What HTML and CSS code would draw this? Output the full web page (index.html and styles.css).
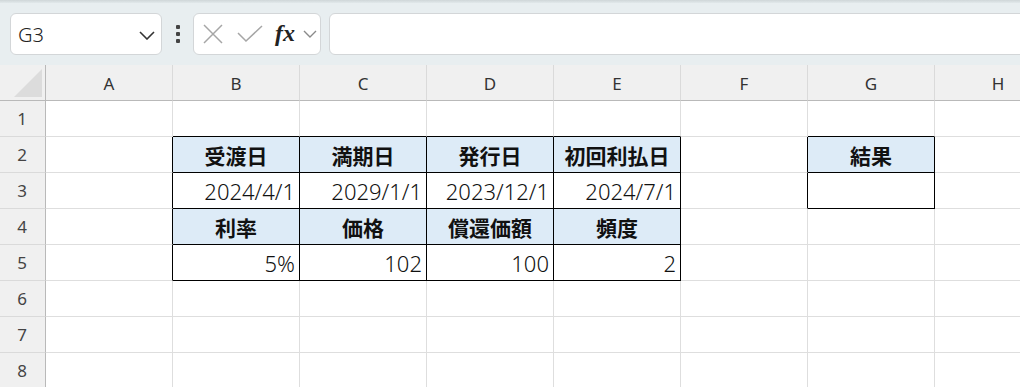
FILE: index.html
```html
<!DOCTYPE html>
<html lang="ja">
<head>
<meta charset="utf-8">
<title>Sheet</title>
<link rel="stylesheet" href="styles.css">
</head>
<body>
<div class="app">
  <div class="topstrip"></div>
  <div class="fbar">
    <div class="namebox">
      <span class="ref">G3</span>
      <svg class="chev" width="16" height="9" viewBox="0 0 16 9"><path d="M1 1 L8 8 L15 1" fill="none" stroke="#333" stroke-width="1.6"/></svg>
    </div>
    <div class="dots"><i></i><i></i><i></i></div>
    <div class="fxbox">
      <svg class="ic" width="22" height="22" viewBox="0 0 22 22"><path d="M2 2 L20 20 M20 2 L2 20" stroke="#a6a6a6" stroke-width="1.5" fill="none"/></svg>
      <svg class="ic ok" width="26" height="18" viewBox="0 0 26 18"><path d="M1 8 L9 16 L25 1" stroke="#a6a6a6" stroke-width="1.5" fill="none"/></svg>
      <span class="fx">fx</span>
      <svg class="chev2" width="14" height="8" viewBox="0 0 14 8"><path d="M1 1 L7 7 L13 1" fill="none" stroke="#8a8a8a" stroke-width="1.4"/></svg>
    </div>
    <div class="finput"></div>
  </div>
  <div class="sheet">
    <div class="corner"><span class="tri"></span></div>
    <div class="ch">A</div><div class="ch">B</div><div class="ch">C</div><div class="ch">D</div><div class="ch">E</div><div class="ch">F</div><div class="ch">G</div><div class="ch">H</div>

    <div class="rh">1</div>
    <div class="c"></div><div class="c bb"></div><div class="c bb"></div><div class="c bb"></div><div class="c bb"></div><div class="c"></div><div class="c bb"></div><div class="c"></div>

    <div class="rh">2</div>
    <div class="c br"></div>
    <div class="c t hd">受渡日</div><div class="c t hd">満期日</div><div class="c t hd">発行日</div><div class="c t hd">初回利払日</div>
    <div class="c br"></div>
    <div class="c t hd">結果</div>
    <div class="c"></div>

    <div class="rh">3</div>
    <div class="c br"></div>
    <div class="c t num">2024/4/1</div><div class="c t num">2029/1/1</div><div class="c t num">2023/12/1</div><div class="c t num">2024/7/1</div>
    <div class="c br"></div>
    <div class="c t"></div>
    <div class="c"></div>

    <div class="rh">4</div>
    <div class="c br"></div>
    <div class="c t hd">利率</div><div class="c t hd">価格</div><div class="c t hd">償還価額</div><div class="c t hd">頻度</div>
    <div class="c"></div><div class="c"></div><div class="c"></div>

    <div class="rh">5</div>
    <div class="c br"></div>
    <div class="c t num">5%</div><div class="c t num">102</div><div class="c t num">100</div><div class="c t num">2</div>
    <div class="c"></div><div class="c"></div><div class="c"></div>

    <div class="rh">6</div>
    <div class="c"></div><div class="c"></div><div class="c"></div><div class="c"></div><div class="c"></div><div class="c"></div><div class="c"></div><div class="c"></div>

    <div class="rh">7</div>
    <div class="c"></div><div class="c"></div><div class="c"></div><div class="c"></div><div class="c"></div><div class="c"></div><div class="c"></div><div class="c"></div>

    <div class="rh">8</div>
    <div class="c"></div><div class="c"></div><div class="c"></div><div class="c"></div><div class="c"></div><div class="c"></div><div class="c"></div><div class="c"></div>
  </div>
</div>
</body>
</html>
```

FILE: styles.css
```css
* { box-sizing: border-box; }
html, body { margin: 0; padding: 0; }
body {
  width: 1020px;
  height: 387px;
  overflow: hidden;
  background: #ffffff;
  font-family: "Noto Sans", "Noto Sans CJK JP", sans-serif;
}
.app { width: 1020px; overflow: hidden; }

.topstrip {
  height: 3px;
  background: linear-gradient(#cfd6d8, #e2e9eb);
}

.fbar {
  display: flex;
  align-items: center;
  height: 62px;
  padding: 10px 0 10px 10px;
  background: #e8eef0;
}
.namebox {
  width: 152px;
  height: 42px;
  background: #fff;
  border: 1px solid #d3d6d8;
  border-radius: 6px;
  display: flex;
  align-items: center;
  justify-content: space-between;
  padding: 0 6px 0 7px;
}
.ref {
  font-family: "Noto Sans", sans-serif;
  font-weight: 300;
  font-size: 20px;
  color: #222;
  line-height: 1;
  padding-top: 2px;
}
.chev { display: block; margin-top: 2px; }

.dots {
  width: 31px;
  display: flex;
  flex-direction: column;
  align-items: center;
  gap: 3px;
}
.dots i {
  display: block;
  width: 4px;
  height: 4px;
  border-radius: 1px;
  background: #444;
}

.fxbox {
  width: 128px;
  height: 42px;
  background: #fff;
  border: 1px solid #d3d6d8;
  border-radius: 6px;
  display: flex;
  align-items: center;
  padding-left: 8px;
}
.ic { display: block; }
.ok { margin-left: 13px; }
.fx {
  font-family: "Liberation Serif", serif;
  font-style: italic;
  font-weight: 700;
  font-size: 24px;
  color: #222;
  margin-left: 12px;
  line-height: 1;
  padding-bottom: 3px;
}
.chev2 { display: block; margin-left: 8px; }

.finput {
  flex: 1;
  height: 42px;
  margin-left: 8px;
  margin-right: -10px;
  background: #fff;
  border: 1px solid #d3d6d8;
  border-radius: 6px;
}

.sheet {
  display: grid;
  grid-template-columns: 46px repeat(8, 127px);
  grid-template-rows: repeat(9, 36px);
  width: 1062px;
}
.corner {
  background: #f0f0f0;
  border-right: 1px solid #b9b9b9;
  border-bottom: 1px solid #b9b9b9;
  display: flex;
  align-items: flex-end;
  justify-content: flex-end;
  padding: 0 3px 3px 0;
}
.tri {
  display: block;
  width: 28px;
  height: 28px;
  background: #dcdcdc;
  clip-path: polygon(100% 0, 100% 100%, 0 100%);
}
.ch {
  background: #f0f0f0;
  border-right: 1px solid #dadada;
  border-bottom: 1px solid #b9b9b9;
  display: flex;
  align-items: center;
  justify-content: center;
  font-size: 17px;
  color: #333;
  padding-top: 1px;
}
.rh {
  background: #f0f0f0;
  border-right: 1px solid #b9b9b9;
  border-bottom: 1px solid #dadada;
  display: flex;
  align-items: center;
  justify-content: center;
  font-size: 17px;
  color: #444;
  padding-right: 1px;
}
.c {
  border-right: 1px solid #dedede;
  border-bottom: 1px solid #dedede;
  display: flex;
  align-items: center;
  overflow: hidden;
  white-space: nowrap;
}
.c.br { border-right-color: #000; }
.c.bb { border-bottom-color: #000; }
.c.t { border-right-color: #000; border-bottom-color: #000; }
.hd {
  background: #ddebf7;
  justify-content: center;
  font-family: "Noto Sans CJK JP", sans-serif;
  font-weight: 700;
  font-size: 21px;
  color: #111;
}
.num {
  justify-content: flex-end;
  padding-right: 4px;
  font-family: "Noto Sans", "Noto Sans CJK JP", sans-serif;
  font-weight: 300;
  font-size: 22px;
  color: #111;
}
```
